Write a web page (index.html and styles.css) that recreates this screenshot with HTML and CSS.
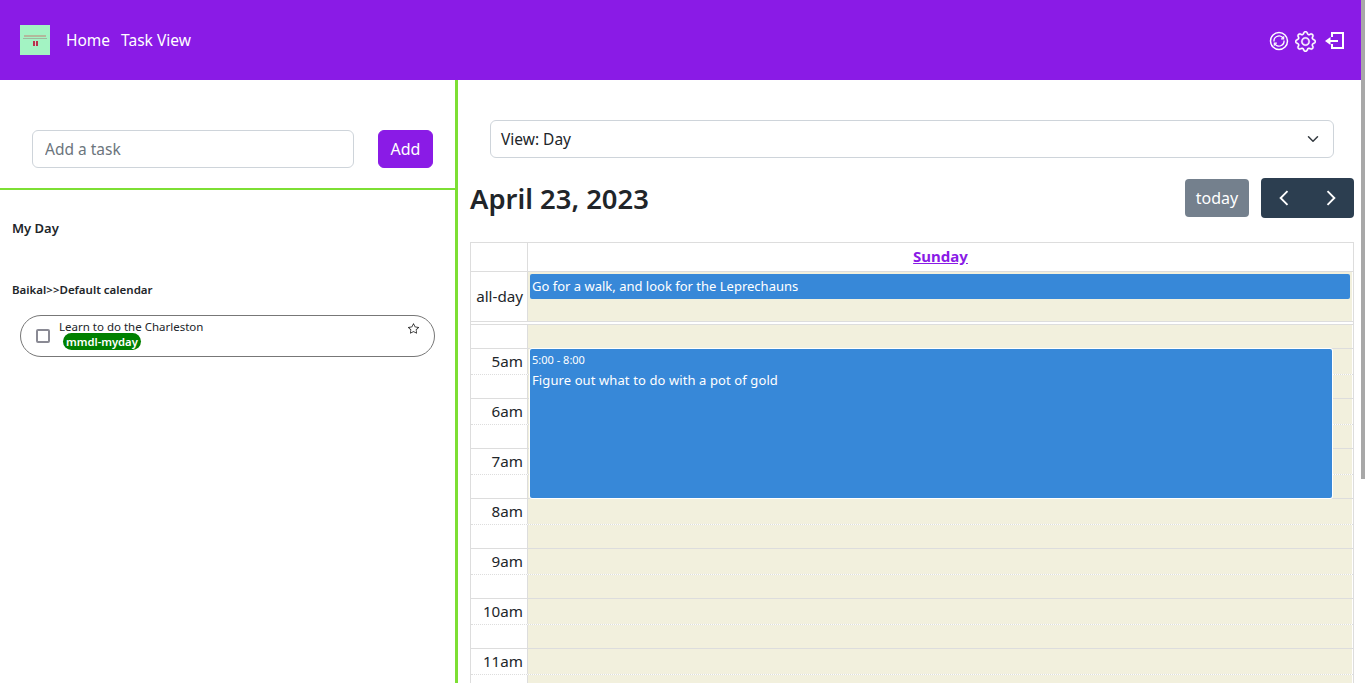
FILE: index.html
```html
<!DOCTYPE html>
<html lang="en">
<head>
<meta charset="utf-8">
<title>Task View</title>
<link rel="stylesheet" href="styles.css">
</head>
<body>
<div class="scrollthumb"></div>
<div class="app">
  <header class="topbar">
    <div class="logo">
      <span class="logo-line1"></span>
      <span class="logo-line2"></span>
      <span class="logo-dots"></span>
    </div>
    <nav class="nav"><a>Home</a><a>Task View</a></nav>
    <div class="icons">
      <svg class="ic-sync" viewBox="0 0 20 20" fill="none" stroke="#fff">
        <circle cx="10" cy="10" r="8.5" stroke-width="1.5"/>
        <path d="M5 10.5a5 5 0 0 1 8.4-4.2l1 1" stroke-width="1.3"/>
        <path d="M15 9.500a5 5 0 0 1-8.400 4.200l-1-1" stroke-width="1.3"/>
        <path d="M14.700 5.300v2.600h-2.600M5.300 14.700v-2.600h2.600" stroke-width="1.100"/>
      </svg>
      <svg class="ic-gear" viewBox="0 0 16 16" fill="#fff" stroke="#fff" stroke-width=".3">
        <path d="M8 4.754a3.246 3.246 0 1 0 0 6.492 3.246 3.246 0 0 0 0-6.492zM5.754 8a2.246 2.246 0 1 1 4.492 0 2.246 2.246 0 0 1-4.492 0z"/>
        <path d="M9.796 1.343c-.527-1.790-3.065-1.790-3.592 0l-.094.319a.873.873 0 0 1-1.255.520l-.292-.160c-1.640-.892-3.433.902-2.540 2.541l.159.292a.873.873 0 0 1-.520 1.255l-.319.094c-1.790.527-1.790 3.065 0 3.592l.319.094a.873.873 0 0 1 .520 1.255l-.160.292c-.892 1.640.901 3.434 2.541 2.540l.292-.159a.873.873 0 0 1 1.255.520l.094.319c.527 1.790 3.065 1.790 3.592 0l.094-.319a.873.873 0 0 1 1.255-.520l.292.160c1.640.893 3.434-.902 2.540-2.541l-.159-.292a.873.873 0 0 1 .520-1.255l.319-.094c1.790-.527 1.790-3.065 0-3.592l-.319-.094a.873.873 0 0 1-.520-1.255l.160-.292c.893-1.640-.902-3.433-2.541-2.540l-.292.159a.873.873 0 0 1-1.255-.520l-.094-.319zm-2.633.283c.246-.835 1.428-.835 1.674 0l.094.319a1.873 1.873 0 0 0 2.693 1.115l.291-.160c.764-.415 1.600.420 1.184 1.185l-.159.292a1.873 1.873 0 0 0 1.116 2.692l.318.094c.835.246.835 1.428 0 1.674l-.319.094a1.873 1.873 0 0 0-1.115 2.693l.160.291c.415.764-.420 1.600-1.185 1.184l-.291-.159a1.873 1.873 0 0 0-2.693 1.116l-.094.318c-.246.835-1.428.835-1.674 0l-.094-.319a1.873 1.873 0 0 0-2.692-1.115l-.292.160c-.764.415-1.600-.420-1.184-1.185l.159-.291A1.873 1.873 0 0 0 1.945 8.930l-.319-.094c-.835-.246-.835-1.428 0-1.674l.319-.094A1.873 1.873 0 0 0 3.060 4.377l-.160-.292c-.415-.764.420-1.600 1.185-1.184l.292.159a1.873 1.873 0 0 0 2.692-1.115l.094-.319z"/>
      </svg>
      <svg class="ic-login" viewBox="0 0 20 20" fill="none" stroke="#fff" stroke-width="2">
        <path d="M7 6V2h11v15H7v-4"/>
        <path d="M4 10h9"/>
        <path d="M0 10l5.500-4v8z" fill="#fff" stroke="none"/>
      </svg>
    </div>
  </header>

  <main class="columns">
    <section class="left">
      <form class="addrow">
        <input class="addinput" type="text" placeholder="Add a task">
        <button class="addbtn" type="button">Add</button>
      </form>
      <h2 class="myday">My Day</h2>
      <h3 class="calname">Baikal&gt;&gt;Default calendar</h3>
      <div class="task">
        <span class="checkbox"></span>
        <div class="task-body">
          <div class="task-title">Learn to do the Charleston</div>
          <span class="tag">mmdl-myday</span>
        </div>
        <svg class="star" viewBox="0 0 16 16" fill="#222">
          <path d="M2.866 14.85c-.078.444.36.791.746.593l4.39-2.256 4.389 2.256c.386.198.824-.149.746-.592l-.83-4.73 3.522-3.356c.33-.314.16-.888-.282-.95l-4.898-.696L8.465.792a.513.513 0 0 0-.927 0L5.354 5.12l-4.898.696c-.441.062-.612.636-.283.95l3.523 3.356-.83 4.73zm4.905-2.767-3.686 1.894.694-3.957a.565.565 0 0 0-.163-.505L1.71 6.745l4.052-.576a.525.525 0 0 0 .393-.288L8 2.223l1.847 3.658a.525.525 0 0 0 .393.288l4.052.575-2.906 2.77a.565.565 0 0 0-.163.506l.694 3.957-3.686-1.894a.503.503 0 0 0-.461 0z"/>
        </svg>
      </div>
    </section>

    <section class="right">
      <div class="select">
        <span>View: Day</span>
        <svg class="chev" viewBox="0 0 16 16" fill="none" stroke="#343a40" stroke-width="2" stroke-linecap="round" stroke-linejoin="round"><path d="m2 5 6 6 6-6"/></svg>
      </div>
      <div class="toolbar">
        <h1 class="date">April 23, 2023</h1>
        <div class="tools">
          <button class="today" type="button">today</button>
          <div class="pager">
            <svg viewBox="0 0 16 16" fill="none" stroke="#fff" stroke-width="1.500"><path d="M10.800 2.500 5.300 8l5.500 5.500"/></svg>
            <svg viewBox="0 0 16 16" fill="none" stroke="#fff" stroke-width="1.500"><path d="M5.200 2.500 10.700 8l-5.500 5.500"/></svg>
          </div>
        </div>
      </div>

      <div class="cal">
        <div class="cal-head">
          <div class="axis"></div>
          <div class="dayname"><a>Sunday</a></div>
        </div>
        <div class="cal-allday">
          <div class="axis allday-label">all-day</div>
          <div class="allday-cell"><div class="event allday-event">Go for a walk, and look for the Leprechauns</div></div>
        </div>
        <div class="cal-divider"></div>
        <div class="cal-grid">
          <div class="timed event">
            <div class="ev-time">5:00 - 8:00</div>
            <div class="ev-title">Figure out what to do with a pot of gold</div>
          </div>
          <div class="slot first"><div class="axis"></div><div class="lane"></div></div>
          <div class="slot"><div class="axis">5am</div><div class="lane"></div></div>
          <div class="slot half"><div class="axis"></div><div class="lane"></div></div>
          <div class="slot"><div class="axis">6am</div><div class="lane"></div></div>
          <div class="slot half"><div class="axis"></div><div class="lane"></div></div>
          <div class="slot"><div class="axis">7am</div><div class="lane"></div></div>
          <div class="slot half"><div class="axis"></div><div class="lane"></div></div>
          <div class="slot"><div class="axis">8am</div><div class="lane"></div></div>
          <div class="slot half"><div class="axis"></div><div class="lane"></div></div>
          <div class="slot"><div class="axis">9am</div><div class="lane"></div></div>
          <div class="slot half"><div class="axis"></div><div class="lane"></div></div>
          <div class="slot"><div class="axis">10am</div><div class="lane"></div></div>
          <div class="slot half"><div class="axis"></div><div class="lane"></div></div>
          <div class="slot"><div class="axis">11am</div><div class="lane"></div></div>
          <div class="slot half"><div class="axis"></div><div class="lane"></div></div>
        </div>
      </div>
    </section>
  </main>
</div>
</body>
</html>
```
FILE: styles.css
```css
* { box-sizing: border-box; }
html, body { margin: 0; height: 683px; overflow: hidden; background: #fff; }
body { font-family: "Noto Sans", "Open Sans", sans-serif; color: #212529; }

.scrollthumb { position: fixed; top: 0; left: 1361px; width: 4px; height: 479px; background: #a8a8a8; z-index: 5; }
.app { width: 1361px; }

.topbar { height: 80px; background: #8a1be6; display: flex; align-items: center; padding: 0 16px 0 20px; color: #fff; }
.logo { width: 30px; height: 30px; background: #a3f3c3; display: flex; flex-direction: column; align-items: center; padding-top: 10px; gap: 1px; }
.logo-line1 { width: 22px; height: 2px; background: #b3b89b; }
.logo-line2 { width: 24px; height: 1px; background: #9fb79f; }
.logo-dots { width: 5px; height: 5px; margin-top: 1px; background: linear-gradient(90deg, #b5334a 0 2px, #d9cfcf 2px 3px, #b5334a 3px 5px); }
.nav { display: flex; gap: 11px; margin-left: 16px; font-size: 15.5px; }
.icons { margin-left: auto; margin-top: 2px; display: flex; align-items: center; gap: 6px; }
.ic-sync { width: 20px; height: 20px; }
.ic-gear { width: 21px; height: 21px; }
.ic-login { width: 20px; height: 20px; margin-left: 3px; }

.columns { display: flex; height: 603px; }
.left { width: 458px; border-right: 3px solid #7ddf34; flex: none; }
.addrow { display: flex; align-items: flex-start; gap: 24px; height: 110px; padding: 50px 22px 0 32px; border-bottom: 2px solid #7ddf34; }
.addinput { width: 322px; height: 38px; border: 1px solid #ced4da; border-radius: 6px; padding: 0 12px; font: 15.5px "Noto Sans", sans-serif; color: #212529; outline: none; }
.addinput::placeholder { color: #6c757d; opacity: 1; }
.addbtn { width: 55px; height: 38px; background: #8a1be6; border: 1px solid #8a1be6; color: #fff; border-radius: 6px; font: 16px "Noto Sans", sans-serif; padding: 0; }
.myday { margin: 30px 0 0 12px; font-size: 13px; line-height: 17px; font-weight: 600; color: #212529; }
.calname { margin: 45px 0 0 12px; font-size: 11.5px; line-height: 16px; font-weight: 600; }
.task { margin: 17px 0 0 20px; width: 415px; height: 42px; border: 1px solid #777; border-radius: 21px; display: flex; padding: 0 15px; align-items: flex-start; }
.checkbox { width: 14px; height: 14px; border: 2px solid #8a8a94; border-radius: 2px; margin-top: 13px; flex: none; }
.task-body { margin-left: 10px; font-size: 11.5px; line-height: 14px; padding-top: 4px; flex: 1; }
.task-title { height: 13px; margin-left: -1px; }
.tag { display: inline-block; margin-left: 3px; background: #008000; color: #fff; font-weight: 600; border-radius: 9px; padding: 0 3px; line-height: 17px; height: 17px; font-size: 11.2px; }
.star { width: 11px; height: 11px; margin-top: 7px; flex: none; }

.right { flex: 1; padding: 40px 7px 0 12px; }
.select { margin: 0 20px; height: 38px; border: 1px solid #ced4da; border-radius: 6px; display: flex; align-items: center; justify-content: space-between; padding: 0 14px 0 10px; font-size: 15.500px; }
.chev { width: 12px; height: 12px; }
.toolbar { display: flex; justify-content: space-between; align-items: center; height: 40px; margin-top: 20px; }
.date { margin: 2px 0 0; font-size: 27.4px; font-weight: 600; line-height: 40px; }
.tools { display: flex; gap: 12px; align-items: center; }
.today { width: 64px; height: 38px; background: #74808d; border: 0; border-radius: 4px; color: #fff; font: 16px "Noto Sans", sans-serif; padding: 0; }
.pager { width: 93px; height: 40px; background: #2c3e50; border-radius: 4px; display: flex; justify-content: space-around; align-items: center; }
.pager svg { width: 20px; height: 20px; }

.cal { margin-top: 24px; width: 884px; border-left: 1px solid #ddd; border-right: 1px solid #ddd; border-top: 1px solid #ddd; font-size: 15.2px; }
.axis { width: 57px; flex: none; border-right: 1px solid #ddd; background: #fff; }
.cal-head { display: flex; height: 28px; }
.dayname { flex: 1; text-align: center; line-height: 27px; font-weight: 700; font-size: 15px; }
.dayname a { color: #8a1be6; text-decoration: underline; }
.cal-allday { display: flex; height: 50px; border-top: 1px solid #ddd; }
.allday-label { text-align: right; padding-right: 4px; line-height: 48px; }
.allday-cell { flex: 1; background: #f2f0dd; margin-right: 1px; padding: 2px; }
.event { background: #3788d8; color: #fff; font-size: 13px; border-radius: 2px; }
.allday-event { height: 25px; line-height: 24px; padding-left: 2px; }
.cal-divider { height: 4px; background: #fff; border-top: 1px solid #ddd; border-bottom: 1px solid #ddd; }
.cal-grid { position: relative; }
.slot { display: flex; height: 26px; border-top: 1px solid #ddd; }
.slot.first { border-top: 0; height: 23px; }
.slot.half { height: 24px; border-top: 1px dotted #ddd; }
.slot .axis { text-align: right; padding-right: 4px; line-height: 24px; }
.lane { flex: 1; background: #f2f0dd; margin-right: 1px; }
.timed { position: absolute; z-index: 2; top: 24px; left: 59px; width: 802px; height: 149px; padding: 0 2px; box-shadow: 0 0 0 1px #fff; }
.ev-time { font-size: 11px; line-height: 22px; }
.ev-title { line-height: 18px; letter-spacing: .1px; }
```
